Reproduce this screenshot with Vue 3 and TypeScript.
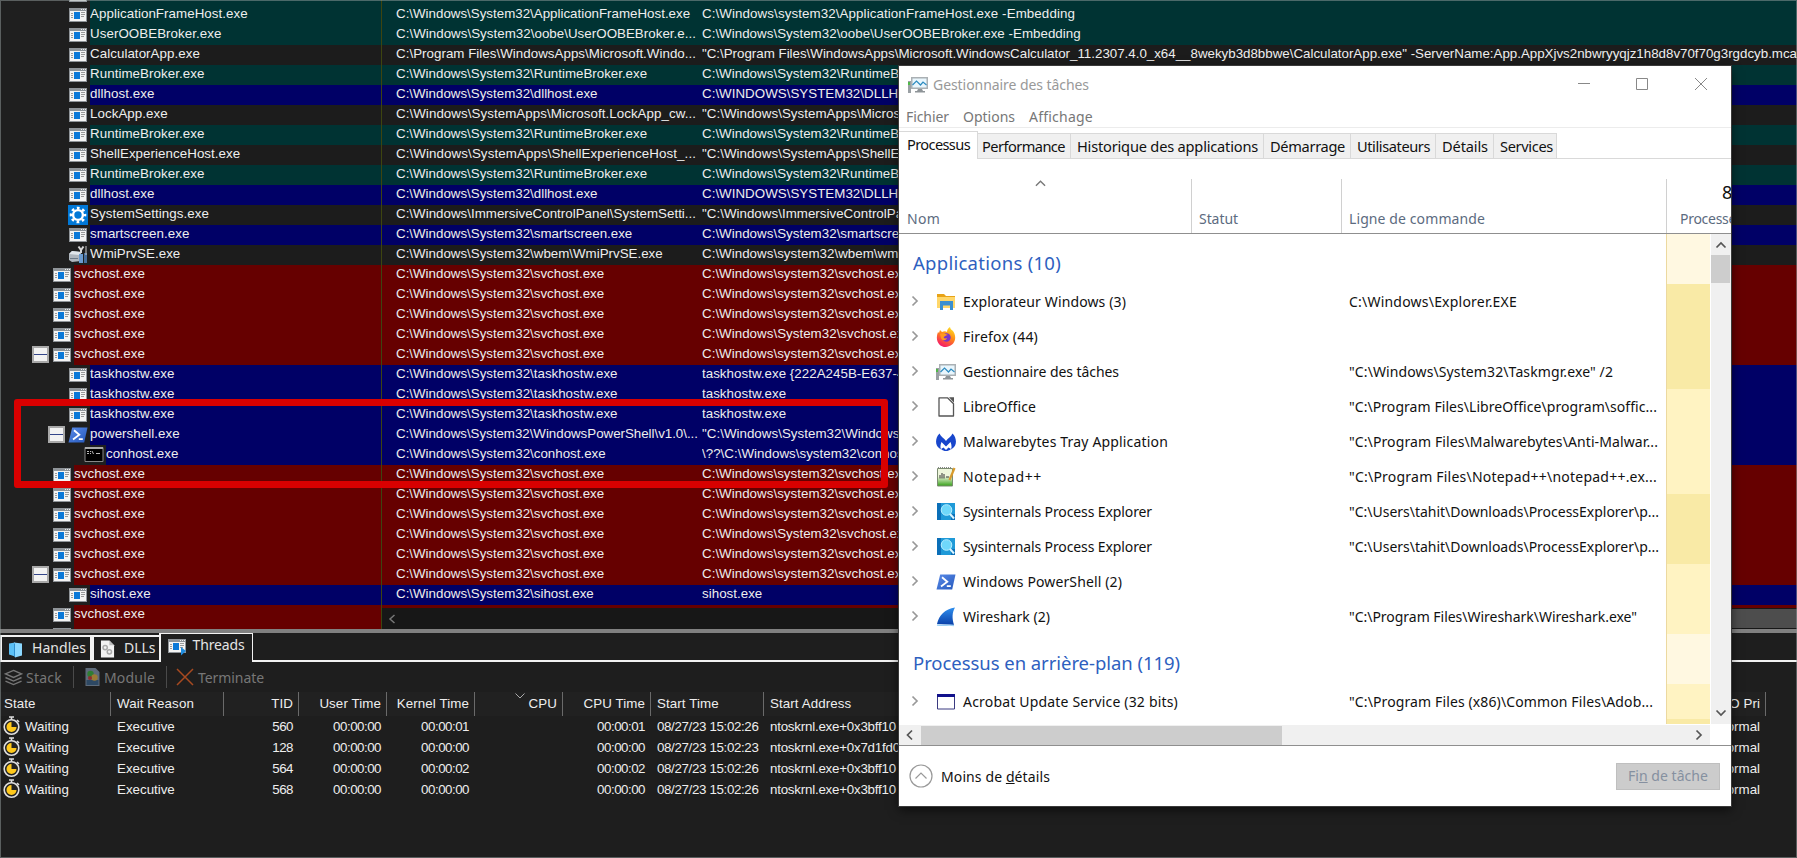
<script setup lang="ts">
type Tone = 'teal' | 'dark' | 'blue' | 'red'
interface Proc { depth: 1 | 2 | 3; tone: Tone; icon: string; name: string; path: string; cmd: string; open?: boolean }

const S = 'C:\\Windows\\System32\\'
const s = 'C:\\Windows\\system32\\'
const p = (depth: 1 | 2 | 3, tone: Tone, name: string, path: string, cmd: string, icon = 'window', open = false): Proc =>
  ({ depth, tone, icon, name, path, cmd, open })
const svc = (cmd: string, open = false) => p(1, 'red', 'svchost.exe', S + 'svchost.exe', cmd + 'svchost.exe', 'window', open)
const broker = () => p(2, 'teal', 'RuntimeBroker.exe', S + 'RuntimeBroker.exe', S + 'RuntimeBroker.exe -Embedding')
const dll = () => p(2, 'blue', 'dllhost.exe', S + 'dllhost.exe', 'C:\\WINDOWS\\SYSTEM32\\DLLHOST.EXE')

const procs: Proc[] = [
  p(2, 'teal', '', '', ''),
  p(2, 'teal', 'ApplicationFrameHost.exe', S + 'ApplicationFrameHost.exe', s + 'ApplicationFrameHost.exe -Embedding'),
  p(2, 'teal', 'UserOOBEBroker.exe', S + 'oobe\\UserOOBEBroker.e...', S + 'oobe\\UserOOBEBroker.exe -Embedding'),
  p(2, 'dark', 'CalculatorApp.exe', 'C:\\Program Files\\WindowsApps\\Microsoft.Windo...', '"C:\\Program Files\\WindowsApps\\Microsoft.WindowsCalculator_11.2307.4.0_x64__8wekyb3d8bbwe\\CalculatorApp.exe" -ServerName:App.AppXjvs2nbwryyqjz1h8d8v70f70g3rgdcyb.mca'),
  broker(),
  dll(),
  p(2, 'dark', 'LockApp.exe', 'C:\\Windows\\SystemApps\\Microsoft.LockApp_cw...', '"C:\\Windows\\SystemApps\\Microsoft.LockApp'),
  broker(),
  p(2, 'dark', 'ShellExperienceHost.exe', 'C:\\Windows\\SystemApps\\ShellExperienceHost_...', '"C:\\Windows\\SystemApps\\ShellExperienceHost'),
  broker(),
  dll(),
  p(2, 'dark', 'SystemSettings.exe', 'C:\\Windows\\ImmersiveControlPanel\\SystemSetti...', '"C:\\Windows\\ImmersiveControlPanel\\SystemSettings.exe"', 'gear'),
  p(2, 'blue', 'smartscreen.exe', S + 'smartscreen.exe', S + 'smartscreen.exe -Embedding'),
  p(2, 'dark', 'WmiPrvSE.exe', S + 'wbem\\WmiPrvSE.exe', s + 'wbem\\wmiprvse.exe', 'wmi'),
  svc(s), svc(s), svc(s), svc(S), svc(s, true),
  p(2, 'blue', 'taskhostw.exe', S + 'taskhostw.exe', 'taskhostw.exe {222A245B-E637-4AE9'),
  p(2, 'blue', 'taskhostw.exe', S + 'taskhostw.exe', 'taskhostw.exe'),
  p(2, 'blue', 'taskhostw.exe', S + 'taskhostw.exe', 'taskhostw.exe'),
  p(2, 'blue', 'powershell.exe', S + 'WindowsPowerShell\\v1.0\\...', '"' + S + 'WindowsPowerShell', 'shell', true),
  p(3, 'blue', 'conhost.exe', S + 'conhost.exe', '\\??\\' + s + 'conhost.exe', 'console'),
  svc(s), svc(s), svc(s), svc(S), svc(s), svc(s, true),
  p(2, 'blue', 'sihost.exe', S + 'sihost.exe', 'sihost.exe'),
  svc(s),
  p(1, 'red', '', '', ''),
]

const threads = [
  { tid: '560', kernel: '00:00:01', cpu: '00:00:01', start: '08/27/23 15:02:26', addr: 'ntoskrnl.exe+0x3bff10' },
  { tid: '128', kernel: '00:00:00', cpu: '00:00:00', start: '08/27/23 15:02:23', addr: 'ntoskrnl.exe+0x7d1fd0' },
  { tid: '564', kernel: '00:00:02', cpu: '00:00:02', start: '08/27/23 15:02:26', addr: 'ntoskrnl.exe+0x3bff10' },
  { tid: '568', kernel: '00:00:00', cpu: '00:00:00', start: '08/27/23 15:02:26', addr: 'ntoskrnl.exe+0x3bff10' },
]

const menus = [
  { t: 'Fichier', w: 43 },
  { t: 'Options', w: 52 },
  { t: 'Affichage', w: 64 },
]
const tabs = [
  { t: 'Performance', w: 83, c: 't1' },
  { t: 'Historique des applications', w: 181, c: 't2' },
  { t: 'Démarrage', w: 75, c: 't3' },
  { t: 'Utilisateurs', w: 73, c: 't4' },
  { t: 'Détails', w: 46, c: 't5' },
  { t: 'Services', w: 53, c: 't6' },
]

interface Task { name: string; w: number; icon?: string; cmd?: string; cw?: number; heat: string }
const tasks: Task[] = [
  { name: 'Applications (10)', w: 148, heat: 'low' },
  { name: 'Explorateur Windows (3)', w: 163, icon: 'folder', cmd: 'C:\\Windows\\Explorer.EXE', cw: 168, heat: 'high' },
  { name: 'Firefox (44)', w: 75, icon: 'firefox', heat: 'high' },
  { name: 'Gestionnaire des tâches', w: 156, icon: 'taskmgr', cmd: '"C:\\Windows\\System32\\Taskmgr.exe" /2', cw: 264, heat: 'high' },
  { name: 'LibreOffice', w: 73, icon: 'libre', cmd: '"C:\\Program Files\\LibreOffice\\program\\soffic...', cw: 308, heat: 'mid' },
  { name: 'Malwarebytes Tray Application', w: 205, icon: 'malware', cmd: '"C:\\Program Files\\Malwarebytes\\Anti-Malwar...', cw: 309, heat: 'mid' },
  { name: 'Notepad++', w: 79, icon: 'notepad', cmd: '"C:\\Program Files\\Notepad++\\notepad++.ex...', cw: 308, heat: 'mid' },
  { name: 'Sysinternals Process Explorer', w: 189, icon: 'procexp', cmd: '"C:\\Users\\tahit\\Downloads\\ProcessExplorer\\p...', cw: 310, heat: 'high' },
  { name: 'Sysinternals Process Explorer', w: 189, icon: 'procexp', cmd: '"C:\\Users\\tahit\\Downloads\\ProcessExplorer\\p...', cw: 310, heat: 'high' },
  { name: 'Windows PowerShell (2)', w: 159, icon: 'shell', heat: 'mid' },
  { name: 'Wireshark (2)', w: 87, icon: 'shark', cmd: '"C:\\Program Files\\Wireshark\\Wireshark.exe"', cw: 288, heat: 'mid' },
  { name: 'Processus en arrière-plan (119)', w: 267, heat: 'low' },
  { name: 'Acrobat Update Service (32 bits)', w: 215, icon: 'exe', cmd: '"C:\\Program Files (x86)\\Common Files\\Adob...', cw: 304, heat: 'mid' },
]

// Tightens or loosens tracking so that a label takes the given width; no width leaves it alone.
const vFit = {
  mounted(el: HTMLElement, b: { value?: number }) {
    const n = (el.textContent ?? '').length
    if (!n || !b.value) return
    el.style.letterSpacing = '0'
    el.style.letterSpacing = `${(b.value - el.getBoundingClientRect().width) / n}px`
  },
}
const pathWidth = (t: string) => (t.endsWith('...') ? (t.includes('v1.0') ? 302 : 300) : undefined)
const cmdWidth = (t: string) => (t.endsWith('mca') ? 1095 : t.endsWith('-Embedding') && t.includes('Host') ? 373 : undefined)
</script>

<template>
  <div class="screen">
    <svg class="defs" aria-hidden="true">
      <defs>
        <linearGradient id="gFox" x1="0.8" y1="0" x2="0.3" y2="1">
          <stop offset="0" stop-color="#ffe226" /><stop offset=".45" stop-color="#ff8a16" /><stop offset="1" stop-color="#f5156c" />
        </linearGradient>
        <linearGradient id="gPs" x1="0" y1="0" x2="1" y2="1"><stop offset="0" stop-color="#5a8be8" /><stop offset="1" stop-color="#2559bd" /></linearGradient>
        <linearGradient id="gFin" x1="0" y1="0" x2="0" y2="1"><stop offset="0" stop-color="#2f8fee" /><stop offset="1" stop-color="#0a3fa8" /></linearGradient>
        <linearGradient id="gNote" x1="0" y1="0" x2="0" y2="1"><stop offset=".45" stop-color="#eef6dc" /><stop offset="1" stop-color="#35a018" /></linearGradient>
      </defs>
      <symbol id="window" viewBox="0 0 20 20">
        <path fill="#f4f4f4" d="M1 3h18v14H1z" /><path fill="#8f9499" d="M1 3h18v3H1zM1 3h1v14H1zM18 3h1v14h-1zM1 16h18v1H1z" />
        <path fill="#0a78d8" d="M6 7h6v7H6z" /><path stroke="#9a9a9a" d="M3 8.5h2M3 10.500h2M3 12.500h2M13 7.500h4M13 9.500h4M13 11.500h3" />
        <path stroke="#eee" d="M13 4.500h1M15 4.500h1M17 4.500h1" />
      </symbol>
      <symbol id="gear" viewBox="0 0 20 20">
        <path fill="#0078d7" d="M0 0h20v20H0z" /><circle cx="10" cy="10" r="4.900" fill="none" stroke="#fff" stroke-width="2.400" />
        <circle cx="10" cy="10" r="7" fill="none" stroke="#fff" stroke-width="2.600" stroke-dasharray="2.700 2.798" stroke-dashoffset="1.350" />
      </symbol>
      <symbol id="wmi" viewBox="0 0 20 20">
        <path fill="#aeb6be" d="M1 9l3-3 9 1v9l-9 1-3-2z" /><path fill="#dfe5ea" d="M1 9l3-3 9 1-2 3z" /><path fill="#6c7a88" d="M2 13h8v1H2z" />
        <path d="M13 8V4M10.500 1.500L13 5l2.500-3.500" stroke="#d7d7d7" stroke-width="2" fill="none" /><path fill="#6b9bd0" d="M11 9h4v9h-4z" /><path fill="#466e9c" d="M16 8h3v10h-3z" /><path stroke="#ccc" d="M18 1v9" />
      </symbol>
      <symbol id="shell" viewBox="0 0 20 16">
        <path fill="url(#gPs)" d="M4.200.5h15.300l-3.300 15H.500z" /><path d="M6 3.300l5.300 4.500-6.300 4.700M10.800 12.200h4" fill="none" stroke="#fff" stroke-width="1.800" />
      </symbol>
      <symbol id="console" viewBox="0 0 20 20">
        <path fill="#000" stroke="#888" d="M1 2.500h18v14H1z" /><path fill="#aaa" d="M1 2h18v2H1z" />
        <path stroke="#bbb" d="M3 6.500h2M3 8.500h2M6.500 6v1M6.500 8v1M8 6l1.500 3M12 8.500h4" />
      </symbol>
      <symbol id="clock" viewBox="0 0 18 20">
        <circle cx="8.500" cy="11" r="7.300" fill="#222" stroke="#dedede" stroke-width="1.600" /><path d="M6 1h5M8.500 1v3M14 4l2 2" stroke="#dedede" stroke-width="1.600" />
        <path fill="#ffc91c" d="M8.500 6v5h5a5 5 0 1 1-5-5z" />
      </symbol>
      <symbol id="folder" viewBox="0 0 20 20">
        <path fill="#e8a317" d="M1 2h7l2 2h9v4H1z" /><path fill="#ffd76a" d="M1 5h18v11H1z" /><path fill="#3a8fd0" d="M4 9h13v9h-3v-4.500H7V18H4z" />
      </symbol>
      <symbol id="firefox" viewBox="0 0 20 20">
        <path fill="url(#gFox)" d="M2 5l1 1 1-3 2 2c2-1 4-1 5 0 0-2 1-4 3-5 0 2 2 3 3 4 4 5 3 15-7 16C2 20-1 12 2 5z" /><circle cx="10.500" cy="10.500" r="4.200" fill="#7a35c9" /><path fill="#ff9a1e" d="M4 7c3-1 6 0 8 1-2 0-3 1-4 2s1 2 3 1c-1 3-5 3-6 0z" />
      </symbol>
      <symbol id="taskmgr" viewBox="0 0 20 20">
        <path fill="#9aa0a4" d="M0 6h3v12H0z" /><path fill="#50b848" d="M0 7h2v3H0z" /><path fill="#aab0b4" d="M3 2h17v12H3z" /><path fill="#e9f6fd" d="M4.500 3.500h14v9h-14z" />
        <path d="M4.500 10l4-4 4 4 2.500-3 3.500 3" fill="none" stroke="#2d8bc0" stroke-width="1.200" /><path fill="#8e9498" d="M10 14h4l1 2h2v1.500H7V16h2z" />
      </symbol>
      <symbol id="libre" viewBox="0 0 20 20">
        <path d="M3 .8h8.500l6 6V19H3z" fill="#fff" stroke="#555" stroke-width="1.300" stroke-linejoin="round" /><path d="M13 .3h5v5.500z" fill="#555" />
      </symbol>
      <symbol id="malware" viewBox="0 0 20 20">
        <path fill="#1846cc" d="M3.500 1.500C5 5 8 6 10 9c2-3 5-4 6.500-7.500C21 6 21 13 17 16l-2 1.500c1-3 .500-5-.500-7.500L10 14.500 5.500 10c-1 2.500-1.500 4.500-.500 7.500L3 16C-1 13-1 6 3.500 1.500zM5 17l2.500-1.500L10 18l2.500-2.500L15 17c-3 2.800-7 2.800-10 0z" />
      </symbol>
      <symbol id="notepad" viewBox="0 0 20 20">
        <path fill="url(#gNote)" stroke="#7b8b70" d="M1.500 1.500h15v17.500h-15z" /><path stroke="#888" stroke-dasharray="1 1" d="M2 .5h14" /><path d="M4 11.500V8M6 11.500V6M8 11.500V7M10 10h3" stroke="#333" fill="none" /><path d="M18.500 1l-5 12" stroke="#d99a2b" stroke-width="2.200" />
      </symbol>
      <symbol id="procexp" viewBox="0 0 20 20">
        <path fill="#1f9ad8" d="M1 1h18v17H1z" /><path fill="#0b6fb8" d="M1 1h4v17H1zM15 12h4v6h-4z" /><circle cx="10.500" cy="8" r="5.300" fill="#6fd8fa" stroke="#b5edff" /><path d="M14 12l4 4.500" stroke="#d9f5ff" stroke-width="2" />
      </symbol>
      <symbol id="shark" viewBox="0 0 20 20">
        <path fill="url(#gFin)" d="M1 17C3 8 9 2 19 .5c-3 5-3 11-1 17.500z" /><path d="M1 18c6 1 12-.5 17 .5" stroke="#9cd0f5" stroke-width="1.300" fill="none" />
      </symbol>
      <symbol id="exe" viewBox="0 0 20 20"><path fill="#fff" stroke="#3a3a80" d="M1.500 2.500h17v14.500h-17z" /><path fill="#12128c" d="M1 2h18v3H1z" /></symbol>
      <symbol id="books" viewBox="0 0 16 16"><path fill="#5cc0f5" d="M1 2l6-1v14l-6-2z" /><path fill="#8cd8ff" d="M6 1l8 1v12l-7 2z" /><path stroke="#2f8fd0" d="M6.500 2v13" /></symbol>
      <symbol id="dllfile" viewBox="0 0 16 18"><path fill="#f2f2f2" d="M1 0h9l5 5v13H1z" /><path fill="#bbb" d="M10 0l5 5h-5z" /><g fill="none" stroke="#aaa" stroke-width="1.600"><circle cx="5.500" cy="7.500" r="2.300" /><circle cx="10" cy="12" r="2.300" /></g></symbol>
      <symbol id="module" viewBox="0 0 16 20"><path fill="#5e6b7a" d="M1 1h10l4 4v14H1z" /><path fill="#2d4863" d="M2 13h12v5H2z" /><circle cx="6" cy="7" r="3.200" fill="#2f7d32" /><circle cx="10" cy="10.500" r="3.200" fill="#9a7b35" /><circle cx="5.500" cy="11" r="2" fill="#8f2f2f" /></symbol>
      <symbol id="stack" viewBox="0 0 20 18"><path d="M10 1.500l8.500 3.700L10 9 1.500 5.200zM1.500 9L10 12.800 18.500 9M1.500 12.800L10 16.500l8.500-3.700" fill="none" stroke="#777" stroke-width="1.500" /></symbol>
      <symbol id="run" viewBox="0 0 20 20"><use href="#window" /><path fill="#1f8de0" d="M14 11l5 4-5 4.500z" /></symbol>
    </svg>

    <section class="tree">
      <div v-for="(r, i) in procs" :key="i" class="proc" :class="r.tone">
        <div class="first">
          <div class="gutter" :class="'d' + r.depth">
            <span v-if="r.open" class="toggle" />
            <svg class="pic" :class="{ ps: r.icon === 'shell' }"><use :href="'#' + r.icon" /></svg>
          </div>
          <div class="band">{{ r.name }}</div>
        </div>
        <div class="band path"><span v-fit="pathWidth(r.path)">{{ r.path }}</span></div>
        <div class="band cmd"><span v-fit="cmdWidth(r.cmd)">{{ r.cmd }}</span></div>
      </div>
      <div class="hbar">
        <svg class="hleft" viewBox="0 0 8 10"><path d="M6.500 1L2 5l4.500 4" /></svg>
        <div class="hthumb" />
      </div>
    </section>

    <section class="lower">
      <nav class="tabs">
        <div class="tab handles"><svg><use href="#books" /></svg><span v-fit="54">Handles</span></div>
        <div class="tab dlls"><svg><use href="#dllfile" /></svg><span v-fit="31.5">DLLs</span></div>
        <div class="tab thr"><svg><use href="#run" /></svg><span v-fit="52">Threads</span></div>
        <div class="rest" />
      </nav>
      <div class="tools">
        <svg class="i1"><use href="#stack" /></svg><span v-fit="36">Stack</span><i class="s1" />
        <svg class="i2"><use href="#module" /></svg><span v-fit="51">Module</span><i class="s2" />
        <svg class="i3" viewBox="0 0 18 18"><path d="M1 1l16 16M17 1L1 17" stroke="#a84a20" stroke-width="1.500" /></svg><span v-fit="66">Terminate</span>
      </div>
      <div class="grid head">
        <div class="st">State</div><div>Wait Reason</div><div class="r">TID</div><div class="r">User Time</div><div class="r">Kernel Time</div>
        <div class="r sort">CPU<svg viewBox="0 0 10 6"><path d="M.5.500L5 5 9.500.500" /></svg></div><div class="r">CPU Time</div><div>Start Time</div><div class="addr">Start Address</div><div class="r">I/O Pri</div>
      </div>
      <div v-for="t in threads" :key="t.tid" class="grid line">
        <div class="st"><svg><use href="#clock" /></svg>Waiting</div><div>Executive</div><div class="r num">{{ t.tid }}</div><div class="r num">00:00:00</div><div class="r num">{{ t.kernel }}</div>
        <div /><div class="r num">{{ t.cpu }}</div><div><span v-fit="101.500">{{ t.start }}</span></div><div class="hex">{{ t.addr }}</div><div class="r">Normal</div>
      </div>
    </section>

    <div class="mark" />

    <section class="tm">
      <header class="title">
        <svg class="logo"><use href="#taskmgr" /></svg><span v-fit="156">Gestionnaire des tâches</span>
        <svg class="ctl" viewBox="0 0 130 14"><path d="M0 6.500h12M58.500 1.500h11v11h-11zM117 1l12 12M129 1l-12 12" /></svg>
      </header>
      <nav class="menu"><span v-for="m in menus" :key="m.t" v-fit="m.w">{{ m.t }}</span></nav>
      <nav class="tmtabs">
        <div class="act"><span v-fit="63">Processus</span></div>
        <div v-for="t in tabs" :key="t.t" :class="t.c"><span v-fit="t.w">{{ t.t }}</span></div>
      </nav>
      <div class="cols">
        <div class="c1"><svg viewBox="0 0 12 7"><path d="M1 6l5-5 5 5" /></svg><span v-fit="33">Nom</span></div>
        <div class="c2"><span v-fit="39">Statut</span></div>
        <div class="c3"><span v-fit="136">Ligne de commande</span></div>
        <div class="c4"><b>8</b><span v-fit="70">Processeur</span></div>
      </div>
      <div class="body">
        <div class="list">
          <div v-for="(t, i) in tasks" :key="i" class="task" :class="{ group: !t.icon }">
            <div class="nm">
              <svg v-if="t.icon" class="chev" viewBox="0 0 8 12"><path d="M1.500 1.500L6 6l-4.500 4.500" /></svg>
              <svg v-if="t.icon" class="ic" :class="t.icon"><use :href="'#' + t.icon" /></svg>
              <span v-fit="t.w">{{ t.name }}</span>
            </div>
            <div class="cm"><span v-if="t.cmd" v-fit="t.cw">{{ t.cmd }}</span></div>
            <div class="heat" :class="t.heat" />
          </div>
          <div class="task"><div class="nm" /><div class="cm" /><div class="heat high" /></div>
        </div>
        <div class="vbar">
          <svg viewBox="0 0 12 8"><path d="M1.500 6.500L6 2l4.500 4.500" /></svg><div class="vthumb" /><svg class="down" viewBox="0 0 12 8"><path d="M1.500 1.500L6 6l4.500-4.500" /></svg>
        </div>
      </div>
      <div class="xbar">
        <svg viewBox="0 0 8 12"><path d="M6 1.500L1.500 6 6 10.500" /></svg><div class="xthumb" /><svg class="right" viewBox="0 0 8 12"><path d="M1.500 1.500L6 6l-4.500 4.500" /></svg>
      </div>
      <footer>
        <svg class="circ" viewBox="0 0 24 24"><circle cx="12" cy="12" r="11" /><path d="M6.500 14.500L12 9l5.500 5.500" /></svg>
        <span v-fit="109">Moins de <u>d</u>étails</span>
        <button><span v-fit="80">Fi<u>n</u> de tâche</span></button>
      </footer>
    </section>
  </div>
</template>

<style>
body { background: #1e1e1e; overflow: hidden; }
</style>

<style scoped>
.screen { position: relative; width: 1797px; height: 858px; overflow: hidden; box-sizing: border-box; background: #1e1e1e; color: #eee; font-family: "Liberation Sans", Arial, sans-serif; font-size: 13.33px; }
.screen::after { content: ""; position: absolute; inset: 0; border: 1px solid rgba(150, 160, 160, .5); pointer-events: none; }
.defs { position: absolute; width: 0; height: 0; }
span { white-space: pre; }

.tree { position: relative; height: 629px; overflow: hidden; background: #1f1f1f; }
.proc { display: flex; height: 20px; line-height: 17px; white-space: pre; letter-spacing: .06px; }
.proc:first-child { margin-top: -15px; }
.first { display: flex; width: 381px; border-right: 1px solid #3d4410; flex: none; }
.gutter { display: flex; justify-content: flex-end; box-sizing: border-box; padding-right: 2px; flex: none; }
.d1 { width: 74px; }
.d2 { width: 90px; }
.d3 { width: 106px; }
.pic { width: 20px; height: 20px; flex: none; }
.pic.ps { height: 16px; margin-top: 2px; }
.toggle { box-sizing: border-box; width: 17px; height: 17px; margin: 1px 3px 0 0; border: 2px solid #a9a9a9; background: linear-gradient(transparent 6px, #33458a 6px, #33458a 7px, transparent 7px), #f2f2f2; flex: none; }
.band { flex: 1; min-width: 0; overflow: hidden; }
.band.path { flex: 0 0 306px; padding-left: 14px; letter-spacing: 0; }
.band.cmd { letter-spacing: .03px; }
.teal .band { background: #003333; }
.dark .band { background: #1c1c1c; }
.blue .band { background: #000066; }
.red .band { background: #660000; }
.hbar { position: absolute; left: 382px; right: 0; top: 608px; height: 21px; background: #171717; display: flex; align-items: center; justify-content: space-between; }
.hleft { width: 8px; height: 10px; margin-left: 6px; fill: none; stroke: #777; stroke-width: 1.500; }
.hthumb { width: 110px; height: 19px; background: #4d4d4d; }

.lower { height: 229px; border-top: 4px solid #808080; box-sizing: border-box; }
.tabs { display: flex; align-items: flex-end; height: 29px; font-family: "Noto Sans", sans-serif; font-size: 14px; color: #e4e4e4; }
.tab { display: flex; align-items: center; box-sizing: border-box; height: 27px; border: 1px solid #f2f2f2; border-width: 2px 2px 2px 0; }
.tab span { position: relative; top: -1.500px; }
.handles { width: 92px; padding-left: 6px; border-left: 2px solid #f2f2f2; }
.handles svg { width: 16px; height: 17px; margin-right: 8px; margin-top: 1px; flex: none; }
.dlls { width: 67px; padding-left: 6px; border-left: 2px solid #f2f2f2; border-right: 0; }
.dlls svg { width: 15px; height: 18px; margin-right: 9px; margin-top: 1px; flex: none; }
.thr { width: 94px; height: 29px; padding: 0 0 4px 6px; border: solid #f2f2f2; border-width: 1px 1px 0 2px; }
.thr svg { width: 20px; height: 20px; margin-right: 5.500px; flex: none; }
.rest { flex: 1; height: 29px; box-sizing: border-box; border-bottom: 2px solid #f2f2f2; }
.tools { display: flex; align-items: center; height: 30px; font-family: "Noto Sans", sans-serif; font-size: 14px; color: #777; }
.tools svg { flex: none; }
.tools i { width: 1px; height: 22px; background: #4a4a4a; }
.i1 { width: 19px; height: 17px; margin: 0 3px 0 4px; }
.s1 { margin: 0 10px 0 11px; }
.i2 { width: 17px; height: 20px; margin-right: 3px; }
.s2 { margin: 0 9px 0 11px; }
.i3 { width: 18px; height: 18px; margin-right: 4px; }
.grid { display: grid; grid-template-columns: 111px 113px 75px 88px 88px 88px 88px 113px 902px 100px; white-space: pre; }
.grid > div { padding: 0 5px 0 6px; overflow: hidden; box-sizing: border-box; }
.grid > .r { text-align: right; }
.head { height: 24px; line-height: 24px; background: linear-gradient(90deg, #212121 1766px, transparent 0); }
.head > div { border-right: 1px solid #6a6a6a; letter-spacing: .1px; position: relative; }
.head > .st { padding-left: 4px; }
.head .addr { border-color: transparent; }
.sort svg { position: absolute; left: 40px; top: 1px; width: 10px; height: 6px; fill: none; stroke: #aaa; }
.line { height: 21px; line-height: 21px; }
.line > .st { display: flex; padding-left: 3px; }
.line > .r { padding-right: 6px; }
.st svg { width: 18px; height: 20px; margin-right: 4px; flex: none; }
.num { letter-spacing: -.5px; }
.hex { letter-spacing: -.22px; }

.mark { position: absolute; left: 14px; top: 399px; width: 874px; height: 89px; box-sizing: border-box; border: 7px solid #d90000; border-radius: 3px; }

.tm { position: absolute; left: 899px; top: 66px; width: 832px; height: 740px; background: #fff; color: #111; font-family: "Noto Sans", "Open Sans", sans-serif; font-size: 14px; box-shadow: 0 0 0 1px #3a3a3a, 0 4px 10px rgba(0, 0, 0, .6); overflow: hidden; display: flex; flex-direction: column; }
.tm span { display: inline-block; }
.title { display: flex; align-items: center; height: 37px; padding-left: 9px; color: #999; flex: none; }
.logo { width: 20px; height: 20px; margin-right: 5px; }
.ctl { width: 130px; height: 14px; margin: 0 23px 2px auto; fill: none; stroke: #888; }
.menu { display: flex; align-items: center; gap: 14px; height: 25px; padding: 2px 0 0 7px; color: #777; border-bottom: 1px solid #ececec; box-sizing: border-box; flex: none; }
.tmtabs { display: flex; align-items: flex-end; height: 31px; box-sizing: border-box; flex: none; font-size: 14.600px; background: linear-gradient(#d9d9d9, #d9d9d9) 0 100% / 100% 1px no-repeat; }
.tmtabs div { height: 26px; line-height: 25px; box-sizing: border-box; border: 1px solid #d9d9d9; border-left: 0; background: #f0f0f0; padding-left: 6px; }
.tmtabs .act { width: 79px; height: 28px; background: #fff; border-bottom: 0; padding-left: 8px; }
.t1 { width: 93px; } .tmtabs .t1 { padding-left: 4px; }
.t2 { width: 193px; } .t3 { width: 87px; } .t4 { width: 85px; } .t5 { width: 58px; } .t6 { width: 63px; }
.cols { display: flex; height: 75px; box-sizing: border-box; border-bottom: 1px solid #8f8f8f; padding-top: 20px; color: #5c6b80; flex: none; }
.cols div { position: relative; box-sizing: border-box; border-right: 1px solid #d0d0d0; padding: 30px 0 0 7px; flex: none; }
.cols .c1 { width: 293px; padding-left: 8px; }
.c1 svg { position: absolute; left: 136px; top: 1px; width: 11px; height: 7px; fill: none; stroke: #777; stroke-width: 1.500; }
.c2 { width: 150px; }
.c3 { width: 325px; }
.cols .c4 { padding-left: 13px; border: 0; }
.c4 b { position: absolute; left: 55px; top: -1px; font-weight: 400; font-size: 18px; color: #111; line-height: 28px; }
.body { display: flex; height: 490px; flex: none; }
.list { width: 811px; height: 490px; overflow: hidden; }
.task { display: flex; height: 35px; line-height: 35px; }
.task.group { height: 50px; line-height: 58px; font-size: 18.500px; color: #2e5fbf; }
.nm { display: flex; width: 450px; flex: none; }
.group .nm { padding-left: 14px; width: 436px; }
.chev { width: 8px; height: 12px; margin: 11px 19px 0 12px; fill: none; stroke: #999; stroke-width: 1.700; }
.ic { width: 20px; height: 20px; margin: 8px 7px 0 -2px; }
.ic.shell { height: 16px; margin-top: 10px; }
.cm { width: 317px; flex: none; }
.heat { width: 43px; border-left: 1px solid #ecd9a0; }
.low { background: #fff8e1; } .mid { background: #fff3c2; } .high { background: #f9eaa6; }
.vbar { display: flex; flex-direction: column; width: 20px; margin-left: 1px; background: #f0f0f0; align-items: center; box-sizing: border-box; padding-right: 1px; }
.vbar svg, .xbar svg { width: 12px; height: 8px; fill: none; stroke: #555; stroke-width: 1.700; margin: 7px 0 6px; flex: none; }
.vthumb { width: 19px; height: 28px; background: #cdcdcd; }
.vbar .down { margin: auto 0 7px; }
.xbar { display: flex; align-items: center; width: 811px; height: 21px; background: #f0f0f0; border-top: 1px solid #fff; box-sizing: border-box; flex: none; }
.xbar svg { width: 8px; height: 12px; margin: 0 7px; }
.xbar .right { margin-left: auto; }
.xthumb { width: 361px; height: 19px; background: #cdcdcd; }
footer { display: flex; align-items: center; flex: 1; border-top: 1px solid #8f8f8f; padding: 0 11px 0 10px; }
.circ { width: 24px; height: 24px; fill: none; stroke: #999; stroke-width: 1.200; margin-right: 8px; }
button { margin-left: auto; width: 104px; height: 27px; box-sizing: border-box; padding: 0; border: 1px solid #bfbfbf; background: #ccc; color: #8590a0; font: inherit; line-height: 24px; }
</style>
